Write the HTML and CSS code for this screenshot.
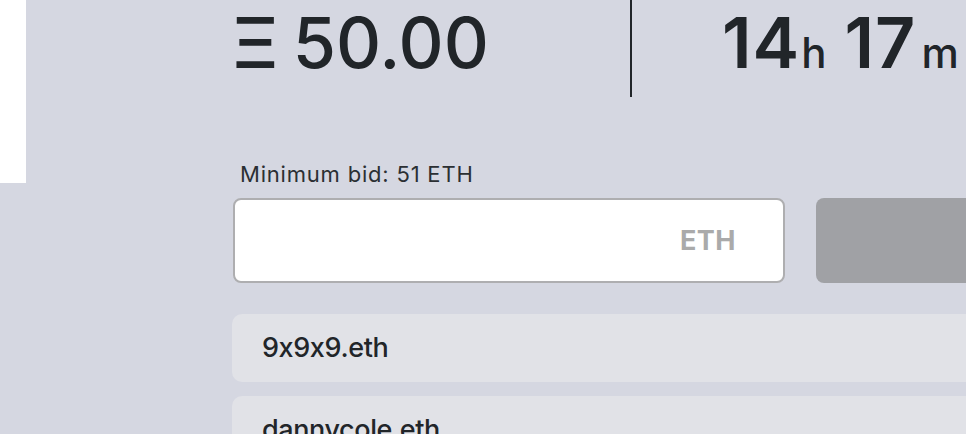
FILE: index.html
```html
<!DOCTYPE html>
<html lang="en">
<head>
<meta charset="utf-8">
<title>Auction</title>
<link rel="stylesheet" href="styles.css">
</head>
<body>
<div class="page">
  <div class="noun-col"></div>
  <div class="main">
    <div class="stats">
      <div class="bid-col">
        <span class="eth-sym">Ξ</span><span class="bid-amount">50.00</span>
      </div>
      <div class="timer-col">
        <span class="num">14</span><span class="unit">h</span><span class="num num-gap">17</span><span class="unit unit-m">m</span>
      </div>
    </div>
    <div class="min-bid">Minimum bid: 51 ETH</div>
    <div class="bid-row">
      <div class="bid-input">
        <span class="placeholder">ETH</span>
      </div>
      <div class="bid-button"></div>
    </div>
    <ul class="bid-list">
      <li class="bid-item">9x9x9.eth</li>
      <li class="bid-item">dannycole.eth</li>
    </ul>
  </div>
</div>
</body>
</html>
```
FILE: styles.css
```css
* {
  box-sizing: border-box;
}

html, body {
  margin: 0;
  padding: 0;
  width: 966px;
  height: 434px;
  overflow: hidden;
  background: #d5d7e1;
}

body {
  font-family: Inter, "Noto Sans", sans-serif;
  font-feature-settings: "calt" 0;
  color: #212529;
}

.page {
  display: flex;
  align-items: flex-start;
  width: 966px;
  height: 434px;
  overflow: hidden;
}

.noun-col {
  flex: 0 0 26px;
  height: 183px;
  background: #ffffff;
}

.main {
  flex: 0 0 auto;
  width: 900px;
  margin-left: 206px;
}

.stats {
  display: flex;
  height: 97px;
}

.bid-col {
  width: 400px;
  height: 97px;
  border-right: 2px solid #212529;
  font-size: 70px;
  line-height: 85px;
  font-weight: 500;
  white-space: nowrap;
}

.eth-sym {
  margin-right: 14px;
}

.timer-col {
  padding-left: 90px;
  font-size: 70px;
  line-height: 85px;
  white-space: nowrap;
}

.num {
  font-weight: 600;
  letter-spacing: 1px;
}

.num-gap {
  margin-left: 18px;
}

.unit {
  font-size: 42px;
  font-weight: 500;
  margin-left: 1px;
}

.unit-m {
  margin-left: 5px;
}

.min-bid {
  margin-top: 64px;
  padding-left: 8px;
  font-size: 22px;
  line-height: 26px;
  letter-spacing: 0.8px;
  color: #2b2f33;
}

.bid-row {
  display: flex;
  gap: 31px;
  margin-top: 11px;
}

.bid-input {
  width: 552px;
  height: 85px;
  margin-left: 1px;
  background: #ffffff;
  border: 2px solid #aeaeb0;
  border-radius: 8px;
  display: flex;
  align-items: center;
  justify-content: flex-end;
  padding-right: 47px;
}

.placeholder {
  font-size: 27px;
  font-weight: 700;
  color: #aaaaaa;
  letter-spacing: 0.5px;
}

.bid-button {
  width: 300px;
  height: 85px;
  background: #a0a1a5;
  border-radius: 8px;
}

.bid-list {
  list-style: none;
  margin: 31px 0 0 0;
  padding: 0;
  display: flex;
  flex-direction: column;
  gap: 14px;
}

.bid-item {
  height: 68px;
  background: #e1e2e7;
  border-radius: 10px;
  padding-left: 30px;
  font-size: 27px;
  line-height: 68px;
  font-weight: 500;
  letter-spacing: -0.4px;
  color: #212529;
}
```
